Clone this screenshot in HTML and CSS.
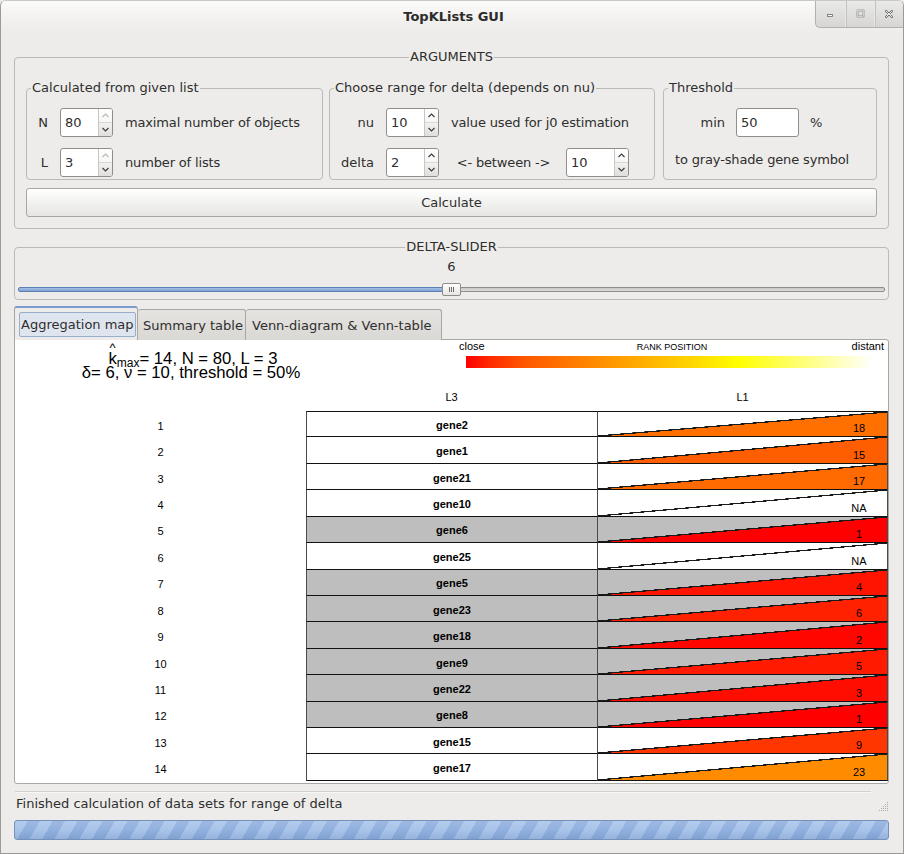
FILE: index.html
```html
<!DOCTYPE html>
<html>
<head>
<meta charset="utf-8">
<title>TopKLists GUI</title>
<link rel="stylesheet" href="styles.css">
</head>
<body>
<div class="window">
  <header class="titlebar">
    <span class="tb-side"></span>
    <span class="title">TopKLists GUI</span>
    <div class="wm">
      <span class="wm-btn"><svg width="9" height="9" viewBox="0 0 9 9"><rect x="1.5" y="5.5" width="5" height="2" fill="#fafafa" stroke="#6b6b69" stroke-width="0.8"/></svg></span>
      <span class="wm-btn"><svg width="9" height="9" viewBox="0 0 9 9"><rect x="1.5" y="1.5" width="6" height="6" fill="none" stroke="#6b6b69" stroke-width="1.6"/><rect x="1.5" y="1.5" width="6" height="6" fill="none" stroke="#fafafa" stroke-width="0.7"/></svg></span>
      <span class="wm-btn"><svg width="10" height="10" viewBox="0 0 10 10"><path d="M2 2 L8 8 M8 2 L2 8" stroke="#6b6b69" stroke-width="2.2" stroke-linecap="round"/><path d="M2 2 L8 8 M8 2 L2 8" stroke="#fafafa" stroke-width="0.9" stroke-linecap="round"/></svg></span>
    </div>
  </header>

  <main class="content">
    <fieldset class="frame args">
      <legend class="frame-title">ARGUMENTS</legend>
      <div class="args-body">
        <div class="groups">
          <fieldset class="group g1">
            <legend class="group-title">Calculated from given list</legend>
            <div class="g1-grid">
              <span class="lbl">N</span>
              <div class="spin"><span class="spin-val">80</span><span class="spin-btns"><span class="up dis"><svg width="7" height="5" viewBox="0 0 7 5"><path d="M0.5 4 L3.5 1 L6.5 4" fill="none" stroke="currentColor" stroke-width="1.2"/></svg></span><span class="dn"><svg width="7" height="5" viewBox="0 0 7 5"><path d="M0.5 1 L3.5 4 L6.5 1" fill="none" stroke="currentColor" stroke-width="1.2"/></svg></span></span></div>
              <span class="txt">maximal number of objects</span>
              <span class="lbl">L</span>
              <div class="spin"><span class="spin-val">3</span><span class="spin-btns"><span class="up dis"><svg width="7" height="5" viewBox="0 0 7 5"><path d="M0.5 4 L3.5 1 L6.5 4" fill="none" stroke="currentColor" stroke-width="1.2"/></svg></span><span class="dn"><svg width="7" height="5" viewBox="0 0 7 5"><path d="M0.5 1 L3.5 4 L6.5 1" fill="none" stroke="currentColor" stroke-width="1.2"/></svg></span></span></div>
              <span class="txt">number of lists</span>
            </div>
          </fieldset>

          <fieldset class="group g2">
            <legend class="group-title">Choose range for delta (depends on nu)</legend>
            <div class="g2-grid">
              <span class="lbl">nu</span>
              <div class="spin"><span class="spin-val">10</span><span class="spin-btns"><span class="up"><svg width="7" height="5" viewBox="0 0 7 5"><path d="M0.5 4 L3.5 1 L6.5 4" fill="none" stroke="currentColor" stroke-width="1.2"/></svg></span><span class="dn"><svg width="7" height="5" viewBox="0 0 7 5"><path d="M0.5 1 L3.5 4 L6.5 1" fill="none" stroke="currentColor" stroke-width="1.2"/></svg></span></span></div>
              <span class="txt span2">value used for j0 estimation</span>
              <span class="lbl">delta</span>
              <div class="spin"><span class="spin-val">2</span><span class="spin-btns"><span class="up"><svg width="7" height="5" viewBox="0 0 7 5"><path d="M0.5 4 L3.5 1 L6.5 4" fill="none" stroke="currentColor" stroke-width="1.2"/></svg></span><span class="dn"><svg width="7" height="5" viewBox="0 0 7 5"><path d="M0.5 1 L3.5 4 L6.5 1" fill="none" stroke="currentColor" stroke-width="1.2"/></svg></span></span></div>
              <span class="txt mid">&lt;- between -&gt;</span>
              <div class="spin"><span class="spin-val">10</span><span class="spin-btns"><span class="up"><svg width="7" height="5" viewBox="0 0 7 5"><path d="M0.5 4 L3.5 1 L6.5 4" fill="none" stroke="currentColor" stroke-width="1.2"/></svg></span><span class="dn"><svg width="7" height="5" viewBox="0 0 7 5"><path d="M0.5 1 L3.5 4 L6.5 1" fill="none" stroke="currentColor" stroke-width="1.2"/></svg></span></span></div>
            </div>
          </fieldset>

          <fieldset class="group g3">
            <legend class="group-title">Threshold</legend>
            <div class="g3-grid">
              <span class="lbl">min</span>
              <div class="entry">50</div>
              <span class="txt">%</span>
              <span class="txt span3">to gray-shade gene symbol</span>
            </div>
          </fieldset>
        </div>
        <button class="btn" type="button">Calculate</button>
      </div>
    </fieldset>

    <fieldset class="frame slider-frame">
      <legend class="frame-title">DELTA-SLIDER</legend>
      <div class="slider-body">
        <div class="slider-value">6</div>
        <div class="slider">
          <span class="track-fill"></span>
          <span class="handle"><i></i><i></i><i></i></span>
          <span class="track-rest"></span>
        </div>
      </div>
    </fieldset>

    <nav class="tabs">
      <span class="tab active"><span class="focus">Aggregation map</span></span>
      <span class="tab t2">Summary table</span>
      <span class="tab t3">Venn-diagram &amp; Venn-table</span>
    </nav>

    <section class="panel">
      <div class="chart-head">
        <div class="stats">
          <div class="stat-line"><span class="hat"><span class="caret">^</span>k</span><sub>max</sub>= 14, N = 80, L = 3</div>
          <div class="stat-line">δ= 6, ν = 10, threshold = 50%</div>
        </div>
        <div class="scale">
          <div class="scale-labels"><span class="s-l">close</span><span class="s-m">RANK POSITION</span><span class="s-r">distant</span></div>
          <div class="scale-bar"></div>
        </div>
      </div>
      <div class="col-labels"><span></span><span>L3</span><span>L1</span></div>
      <div class="agg">
        <div class="row"><span class="rk">1</span><span class="gene">gene2</span><span class="pos" style="--fill:#ff7000"><b>18</b></span></div>
        <div class="row"><span class="rk">2</span><span class="gene">gene1</span><span class="pos" style="--fill:#ff5e00"><b>15</b></span></div>
        <div class="row"><span class="rk">3</span><span class="gene">gene21</span><span class="pos" style="--fill:#ff6b00"><b>17</b></span></div>
        <div class="row"><span class="rk">4</span><span class="gene">gene10</span><span class="pos na"><b>NA</b></span></div>
        <div class="row gray"><span class="rk">5</span><span class="gene">gene6</span><span class="pos" style="--fill:#ff0000"><b>1</b></span></div>
        <div class="row"><span class="rk">6</span><span class="gene">gene25</span><span class="pos na"><b>NA</b></span></div>
        <div class="row gray"><span class="rk">7</span><span class="gene">gene5</span><span class="pos" style="--fill:#ff1400"><b>4</b></span></div>
        <div class="row gray"><span class="rk">8</span><span class="gene">gene23</span><span class="pos" style="--fill:#ff2100"><b>6</b></span></div>
        <div class="row gray"><span class="rk">9</span><span class="gene">gene18</span><span class="pos" style="--fill:#ff0700"><b>2</b></span></div>
        <div class="row gray"><span class="rk">10</span><span class="gene">gene9</span><span class="pos" style="--fill:#ff1a00"><b>5</b></span></div>
        <div class="row gray"><span class="rk">11</span><span class="gene">gene22</span><span class="pos" style="--fill:#ff0d00"><b>3</b></span></div>
        <div class="row gray"><span class="rk">12</span><span class="gene">gene8</span><span class="pos" style="--fill:#ff0000"><b>1</b></span></div>
        <div class="row"><span class="rk">13</span><span class="gene">gene15</span><span class="pos" style="--fill:#ff3600"><b>9</b></span></div>
        <div class="row"><span class="rk">14</span><span class="gene">gene17</span><span class="pos" style="--fill:#ff8c00"><b>23</b></span></div>
      </div>
    </section>

    <div class="separator"></div>
    <div class="status">
      <span>Finished calculation of data sets for range of delta</span>
      <svg class="grip" width="11" height="11" viewBox="0 0 11 11"><g fill="#a9a8a4"><rect x="9" y="1" width="1" height="1"/><rect x="7" y="3" width="1" height="1"/><rect x="9" y="3" width="1" height="1"/><rect x="5" y="5" width="1" height="1"/><rect x="7" y="5" width="1" height="1"/><rect x="9" y="5" width="1" height="1"/><rect x="3" y="7" width="1" height="1"/><rect x="5" y="7" width="1" height="1"/><rect x="7" y="7" width="1" height="1"/><rect x="9" y="7" width="1" height="1"/><rect x="1" y="9" width="1" height="1"/><rect x="3" y="9" width="1" height="1"/><rect x="5" y="9" width="1" height="1"/><rect x="7" y="9" width="1" height="1"/><rect x="9" y="9" width="1" height="1"/></g></svg>
    </div>
    <div class="progress"></div>
  </main>
</div>
</body>
</html>
```

FILE: styles.css
```css
* { box-sizing: border-box; }

html, body {
  margin: 0;
  padding: 0;
}

body {
  width: 904px;
  height: 854px;
  overflow: hidden;
  background: #edeceb;
  font-family: "DejaVu Sans", "Noto Sans", sans-serif;
  font-size: 13px;
  color: #2e2e2d;
}

.window {
  width: 904px;
  height: 854px;
  border: 1px solid #9b9a97;
  border-top-color: #c9c8c5;
  border-radius: 6px 6px 0 0;
  background: #edeceb;
  display: flex;
  flex-direction: column;
  overflow: hidden;
}

/* ---------- title bar ---------- */
.titlebar {
  flex: none;
  height: 33px;
  display: grid;
  grid-template-columns: 1fr auto 1fr;
  background: linear-gradient(#fbfbfa, #f1f0ef 60%, #edeceb);
}

.title {
  align-self: center;
  font-weight: bold;
  line-height: 16px;
  margin-top: -2px;
  padding-left: 3px;
  color: #2b2b2a;
}

.wm {
  justify-self: end;
  align-self: start;
  display: flex;
  height: 28px;
  margin-top: -1px;
  border-left: 1px solid #b2b1ad;
  border-bottom: 1px solid #b2b1ad;
  border-radius: 0 0 0 5px;
  background: linear-gradient(#ebebea, #d6d5d2);
  overflow: hidden;
}

.wm-btn {
  width: 29px;
  display: flex;
  align-items: center;
  justify-content: center;
  border-left: 1px solid #e9e8e6;
  box-shadow: inset 1px 0 0 #c3c2bf;
}

.wm-btn:first-child {
  border-left: none;
  box-shadow: none;
}

/* ---------- content ---------- */
.content {
  flex: 1;
  display: flex;
  flex-direction: column;
  padding: 15px 14px 0 13px;
}

.frame {
  margin: 0;
  padding: 0;
  min-width: 0;
  border: 1px solid #bcbab6;
  border-radius: 4px;
}

.frame-title {
  margin: 0 auto;
  padding: 0 1px;
  line-height: 16px;
}

.args-body {
  padding: 15px 11px 11px 11px;
}

.groups {
  display: flex;
  align-items: stretch;
}

.group {
  margin: 0;
  padding: 0;
  min-width: 0;
  border: 1px solid #bcbab6;
  border-radius: 4px;
}

.group-title {
  margin-left: 4px;
  padding: 0 1px;
  line-height: 16px;
}

.g1 { width: 297px; margin-right: 6px; }
.g2 { width: 326px; margin-right: 8px; }
.g3 { width: 214px; }

.g1-grid,
.g2-grid,
.g3-grid {
  display: grid;
  align-items: center;
  column-gap: 12px;
  row-gap: 11px;
  grid-auto-rows: 29px;
  padding: 12px 0 2px 8px;
}

.g1-grid { grid-template-columns: 13px 53px 1fr; }
.g2-grid { grid-template-columns: 36px 53px 103px 63px; }
.g3-grid {
  grid-template-columns: 50px 63px auto;
  grid-template-rows: 29px 16px;
  column-gap: 11px;
  row-gap: 15px;
  padding-left: 11px;
}

.lbl {
  justify-self: end;
  line-height: 16px;
}

.txt { line-height: 16px; white-space: nowrap; letter-spacing: -0.15px; }
.span2 { grid-column: 3 / 5; }
.span3 { grid-column: 1 / 4; }
.mid { justify-self: center; padding-left: 2px; }

.spin,
.entry {
  height: 29px;
  display: flex;
  background: #fff;
  border: 1px solid #8f8e8b;
  border-radius: 3px;
  overflow: hidden;
}

.spin-val {
  flex: 1;
  padding-left: 4px;
  line-height: 27px;
}

.entry {
  padding-left: 4px;
  line-height: 27px;
}

.spin-btns {
  width: 14px;
  display: flex;
  flex-direction: column;
  border-left: 1px solid #c7c6c3;
  color: #3d3d3c;
}

.spin-btns > span {
  flex: 1;
  display: flex;
  align-items: center;
  justify-content: center;
}

.spin-btns .up {
  background: linear-gradient(#ffffff, #f6f6f5);
}

.spin-btns .dn {
  background: linear-gradient(#f2f2f1, #dfdedc);
  border-top: 1px solid #d8d7d4;
}

.spin-btns .dis { color: #b9b8b5; }

.btn {
  display: block;
  width: 100%;
  height: 29px;
  margin: 8px 0 0;
  padding: 0;
  border: 1px solid #a9a7a3;
  border-radius: 3px;
  background: linear-gradient(#ffffff, #f4f4f3 40%, #e6e5e3);
  font: inherit;
  color: inherit;
  line-height: 16px;
}

/* ---------- slider ---------- */
.slider-frame { margin-top: 10px; }

.slider-body { padding: 4px 3px 0; }

.slider-value {
  text-align: center;
  line-height: 16px;
}

.slider {
  margin-top: 5px;
  height: 19px;
  display: flex;
  align-items: center;
}

.track-fill {
  flex: 0 0 425px;
  height: 5px;
  margin-right: -1px;
  border: 1px solid #5b7fb3;
  border-radius: 2px 0 0 2px;
  background: linear-gradient(#a6c1e8, #7ea2d4);
}

.handle {
  position: relative;
  z-index: 1;
  flex: 0 0 19px;
  height: 13px;
  display: flex;
  align-items: center;
  justify-content: center;
  gap: 1px;
  border: 1px solid #8d8c89;
  border-radius: 2px;
  background: linear-gradient(#ffffff, #e5e4e2);
}

.handle i {
  width: 1px;
  height: 5px;
  background: #6d6c69;
}

.track-rest {
  flex: 1;
  height: 5px;
  margin-left: -1px;
  border: 1px solid #8f8e8b;
  border-radius: 0 2px 2px 0;
  background: linear-gradient(#c8c7c4, #dedddb);
}

/* ---------- tabs ---------- */
.tabs {
  margin-top: 6px;
  height: 34px;
  display: flex;
  align-items: flex-end;
  position: relative;
  z-index: 1;
}

.tab {
  height: 31px;
  display: flex;
  align-items: center;
  padding: 1px 5px 0;
  border: 1px solid #a9a7a3;
  border-bottom: none;
  border-left: none;
  border-radius: 3px 3px 0 0;
  background: linear-gradient(#e4e3e0, #d9d8d5);
  line-height: 16px;
  white-space: nowrap;
}

.t2 { width: 108px; }
.t3 { width: 196px; padding-left: 6px; }

.tab.active {
  height: 34px;
  width: 124px;
  padding: 4px 4px 3px 4px;
  border-left: 1px solid #a9a7a3;
  border-top: 2px solid #7c9ccb;
  background: #edeceb;
}

.focus {
  flex: 1;
  height: 25px;
  display: flex;
  align-items: center;
  padding: 0 1px;
  border: 1px solid #99aecb;
  border-radius: 2px;
  background: #dfe5ee;
}

/* ---------- panel & chart ---------- */
.panel {
  height: 445px;
  margin-top: -1px;
  border: 1px solid #a9a7a3;
  border-radius: 0 3px 3px 3px;
  background: #fff;
  overflow: hidden;
  font-family: "Liberation Sans", Arial, sans-serif;
  color: #000;
}

.chart-head {
  height: 51px;
  display: grid;
  grid-template-columns: 352px 425px;
  column-gap: 92px;
}

.stats {
  padding-top: 12px;
  text-align: center;
  font-size: 16.7px;
}

.stat-line {
  line-height: 14px;
  height: 14px;
  white-space: nowrap;
}

.stat-line:first-child { padding-left: 4px; }

.hat { position: relative; }

.caret {
  position: absolute;
  left: 1px;
  top: -8px;
  font-size: 13px;
}

.stat-line sub {
  font-size: 12px;
  line-height: 0;
  vertical-align: -3px;
}

.scale-labels {
  display: grid;
  grid-template-columns: 1fr auto 1fr;
  align-items: baseline;
  line-height: 13px;
  font-size: 11px;
}

.s-m { font-size: 9px; padding-left: 1px; }
.s-r { justify-self: end; }

.scale-bar {
  height: 12px;
  margin: 2px 11px 0 7px;
  background: linear-gradient(90deg,
    #ff0000 0%, #ff2a00 6%, #ff5500 14%, #ff8000 28%, #ffaa00 42%, #ffd400 55%, #ffff00 67%,
    #ffff40 75%, #ffff80 84%, #ffffbf 92%, #ffffff 100%);
}

.col-labels,
.row {
  display: grid;
  grid-template-columns: 291px 291px 291px;
}

.col-labels {
  height: 13px;
  line-height: 13px;
  font-size: 11px;
  text-align: center;
}

.agg {
  margin-top: 7px;
}

.row {
  height: 26.43px;
  font-size: 11px;
}

.rk {
  display: flex;
  align-items: center;
  justify-content: center;
  padding-top: 3px;
}

.gene,
.pos {
  --bg: #fff;
  border-bottom: 1px solid #111;
  border-left: 1px solid #4a4a4a;
}

.row:first-child .gene,
.row:first-child .pos {
  border-top: 1px solid #111;
}

.gray .gene,
.gray .pos { --bg: #bebebe; }

.gene {
  display: flex;
  align-items: center;
  justify-content: center;
  padding-top: 2px;
  background: var(--bg);
  font-weight: bold;
}

.pos {
  --fill: var(--bg);
  border-right: 1px solid #4a4a4a;
  display: flex;
  align-items: flex-end;
  justify-content: flex-end;
  padding: 0 13px 1px 0;
  background: linear-gradient(to bottom right,
    var(--bg) calc(50% - 0.7px), #1a1a1a calc(50% - 0.6px),
    #1a1a1a calc(50% + 0.6px), var(--fill) calc(50% + 0.7px));
}

.pos.na { --fill: var(--bg); }

.pos b {
  width: 30px;
  text-align: center;
  font-weight: normal;
  line-height: 13px;
}

/* ---------- status ---------- */
.separator {
  margin: 7px 18px 0 1px;
  height: 2px;
  border-top: 1px solid #d2d1ce;
  border-bottom: 1px solid #f7f7f6;
}

.status {
  margin-top: 2px;
  height: 17px;
  display: flex;
  align-items: center;
  justify-content: space-between;
  padding-left: 2px;
  line-height: 16px;
}

.grip { margin-top: 6px; }

.progress {
  margin-top: 8px;
  height: 20px;
  border: 1px solid #7591bb;
  border-radius: 3px;
  background:
    linear-gradient(rgba(255,255,255,0.12), rgba(255,255,255,0) 50%, rgba(20,50,110,0.12)),
    repeating-linear-gradient(120deg, #a9c4ea 0px, #a9c4ea 11px, #90b0de 11px, #90b0de 21.6px);
}
```
